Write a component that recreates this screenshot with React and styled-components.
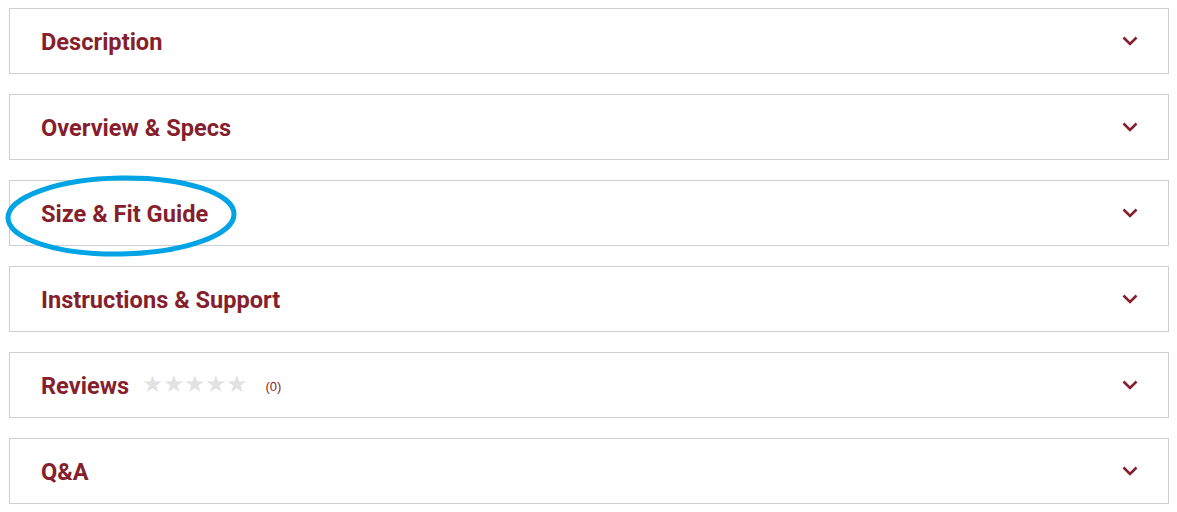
import React from 'react';
import styled, { createGlobalStyle } from 'styled-components';

const GlobalStyle = createGlobalStyle`
    body {
        margin: 0;
        background: #fff;
        font-family: Roboto, 'Liberation Sans', sans-serif;
    }
`;

const Page = styled.div`
    position: relative;
    padding: 8px 0 0 9px;
    width: 1160px;
    display: flex;
    flex-direction: column;
    gap: 20px;
`;

const Panel = styled.div`
    height: 64px;
    border: 1px solid #cfcfcf;
    display: flex;
    align-items: center;
    justify-content: space-between;
    padding: 0 30px 0 31px;
    cursor: pointer;
`;

const Title = styled.div`
    display: flex;
    align-items: center;
    margin-top: 2px;
    font-size: 23.6px;
    font-weight: 700;
    color: #861f2d;
`;

const Stars = styled.span`
    margin-left: 13px;
    color: #e2e2e2;
    font-size: 23.5px;
    line-height: 1;
    margin-top: -2px;
    font-family: 'DejaVu Sans', sans-serif;
`;

const Count = styled.span`
    margin-left: 18px;
    font-size: 13px;
    font-weight: 400;
    color: #861f2d;
    font-family: 'Liberation Sans', sans-serif;
`;

const Circle = styled.svg`
    position: absolute;
    left: 3px;
    top: 175px;
    pointer-events: none;
`;

const Chevron = () => (
    <svg width="16" height="10" viewBox="0 0 16 10">
        <path d="M1.5 1.5 L8 8 L14.5 1.5" fill="none" stroke="#861f2d" strokeWidth="2.6" />
    </svg>
);

const sections = ['Description', 'Overview & Specs', 'Size & Fit Guide', 'Instructions & Support', 'Reviews', 'Q&A'];

export default function App() {
    return (
        <>
            <GlobalStyle />
            <Page>
                {sections.map((s) => (
                    <Panel key={s}>
                        <Title>
                            {s}
                            {s === 'Reviews' && (
                                <>
                                    <Stars>★★★★★</Stars>
                                    <Count>(0)</Count>
                                </>
                            )}
                        </Title>
                        <Chevron />
                    </Panel>
                ))}
                <Circle width="236" height="84" viewBox="0 0 236 84">
                    <ellipse cx="118" cy="41" rx="113" ry="38" fill="none" stroke="#00a3e4" strokeWidth="5" transform="rotate(-1 118 41)" />
                </Circle>
            </Page>
        </>
    );
}
